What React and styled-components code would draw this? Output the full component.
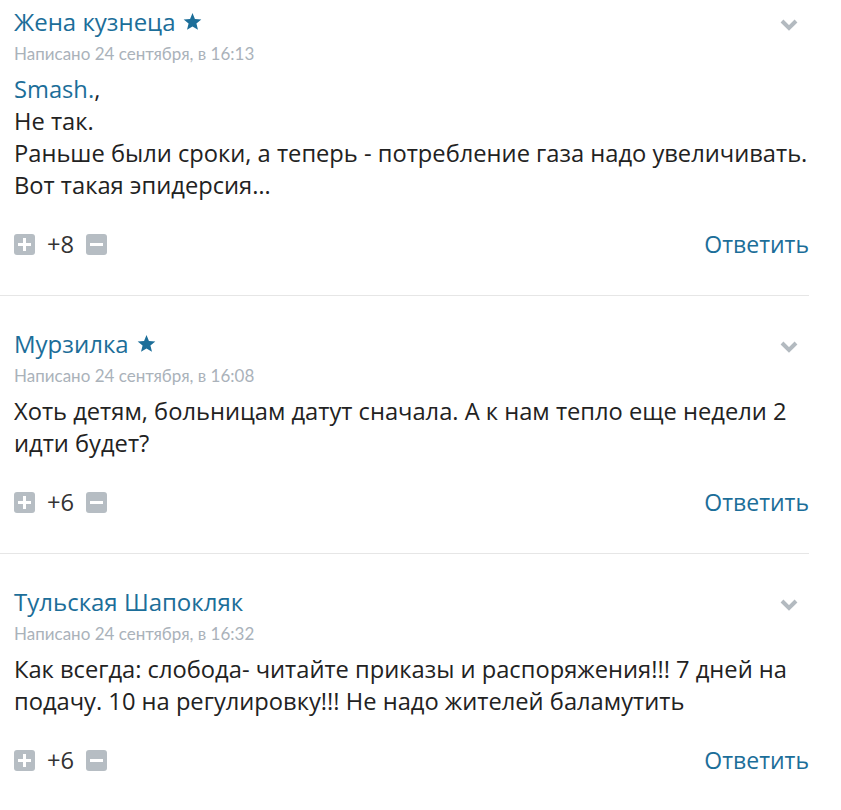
import React from 'react';
import styled, { createGlobalStyle } from 'styled-components';

const GlobalStyle = createGlobalStyle`
  body {
    margin: 0;
    background: #fff;
    font-family: 'Open Sans', 'Liberation Sans', sans-serif;
  }
`;

const comments = [
  {
    id: 1,
    author: 'Жена кузнеца',
    star: true,
    date: 'Написано 24 сентября, в 16:13',
    mention: 'Smash.',
    lines: [
      'Не так.',
      'Раньше были сроки, а теперь - потребление газа надо увеличивать.',
      'Вот такая эпидерсия…',
    ],
    rating: '+8',
  },
  {
    id: 2,
    author: 'Мурзилка',
    star: true,
    date: 'Написано 24 сентября, в 16:08',
    lines: [
      'Хоть детям, больницам датут сначала. А к нам тепло еще недели 2 идти будет?',
    ],
    rating: '+6',
  },
  {
    id: 3,
    author: 'Тульская Шапокляк',
    star: false,
    date: 'Написано 24 сентября, в 16:32',
    lines: [
      'Как всегда: слобода- читайте приказы и распоряжения!!! 7 дней на подачу. 10 на регулировку!!! Не надо жителей баламутить',
    ],
    rating: '+6',
  },
];

const List = styled.div`
  width: 809px;
  display: flex;
  flex-direction: column;
`;

const Comment = styled.div`
  padding: 0 0 36px 14px;
  border-top: ${({ $first }) => ($first ? 'none' : '1px solid #e6e6e6')};
  padding-top: ${({ $first }) => ($first ? '5px' : '31px')};
`;

const Head = styled.div`
  display: flex;
  align-items: center;
  justify-content: space-between;
`;

const Author = styled.a`
  display: flex;
  align-items: center;
  gap: 8px;
  color: #1c6e99;
  font-size: 24px;
  line-height: 34px;
  text-decoration: none;
`;

const Chevron = styled.svg`
  width: 18px;
  height: 12px;
  margin-right: 11px;
  margin-top: 6px;
`;

const DateLine = styled.div`
  font-family: Lato, 'Open Sans', sans-serif;
  font-size: 17px;
  line-height: 24px;
  color: #aab2ba;
  margin-top: 3px;
`;

const Body = styled.div`
  margin-top: 7px;
  font-size: 23.7px;
  line-height: 32px;
  color: #222;
`;

const Mention = styled.a`
  color: #1c6e99;
  text-decoration: none;
`;

const Footer = styled.div`
  margin-top: 28px;
  display: flex;
  align-items: center;
  justify-content: space-between;
`;

const Votes = styled.div`
  display: flex;
  align-items: center;
  gap: 12px;
`;

const VoteBtn = styled.span`
  width: 21px;
  height: 21px;
  border-radius: 3px;
  background: #b6bdc3;
  display: flex;
  align-items: center;
  justify-content: center;
`;

const Rating = styled.span`
  font-size: 23.7px;
  line-height: 30px;
  color: #333;
`;

const Reply = styled.a`
  font-size: 23px;
  line-height: 30px;
  color: #1c6e99;
  text-decoration: none;
`;

const Star = () => (
  <svg width="19" height="18" viewBox="0 0 24 23">
    <path
      fill="#1c6e99"
      d="M12 0l3.1 7.6 8.2.6-6.3 5.3 2 8L12 17.2 5 21.5l2-8L.7 8.2l8.2-.6z"
    />
  </svg>
);

const Plus = () => (
  <svg width="13" height="13" viewBox="0 0 13 13">
    <rect x="5" y="0" width="3" height="13" fill="#fff" />
    <rect x="0" y="5" width="13" height="3" fill="#fff" />
  </svg>
);

const Minus = () => (
  <svg width="13" height="13" viewBox="0 0 13 13">
    <rect x="0" y="5" width="13" height="3" fill="#fff" />
  </svg>
);

const App = () => {
  return (
    <>
      <GlobalStyle />
      <List>
        {comments.map((c, i) => (
          <Comment key={c.id} $first={i === 0}>
            <Head>
              <Author href="#">
                {c.author}
                {c.star && <Star />}
              </Author>
              <Chevron viewBox="0 0 18 12">
                <path
                  d="M2 2l7 7 7-7"
                  fill="none"
                  stroke="#b3bac0"
                  strokeWidth="4"
                />
              </Chevron>
            </Head>
            <DateLine>{c.date}</DateLine>
            <Body>
              {c.mention && (
                <div>
                  <Mention href="#">{c.mention}</Mention>,
                </div>
              )}
              {c.lines.map((line, j) => (
                <div key={j}>{line}</div>
              ))}
            </Body>
            <Footer>
              <Votes>
                <VoteBtn>
                  <Plus />
                </VoteBtn>
                <Rating>{c.rating}</Rating>
                <VoteBtn>
                  <Minus />
                </VoteBtn>
              </Votes>
              <Reply href="#">Ответить</Reply>
            </Footer>
          </Comment>
        ))}
      </List>
    </>
  );
};

export default App;
